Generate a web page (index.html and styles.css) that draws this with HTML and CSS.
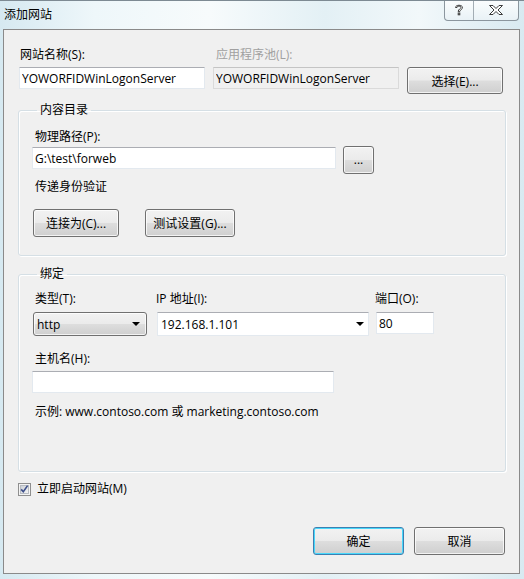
FILE: index.html
```html
<!DOCTYPE html>
<html lang="zh-CN">
<head>
    <meta charset="UTF-8">
    <title>添加网站</title>
    <link rel="stylesheet" href="styles.css">
</head>
<body>
    <div class="window">
        <div class="titlebar">
            <span class="title">添加网站</span>
            <div class="caption-btns">
                <span class="cbtn help">
                    <svg width="12" height="14" viewBox="0 0 12 14">
                        <path d="M2.5 4.5 C2.5 1.5 9.5 1.5 9.5 4.5 C9.5 6.5 6.8 6.8 6.8 8.5 L5.2 8.5 C5.2 6 8 5.8 8 4.4 C8 2.6 4 2.6 4 4.5 Z" fill="#fff" stroke="#3b3b3b" stroke-width="1"/>
                        <rect x="5.2" y="10" width="1.6" height="1.8" fill="#fff" stroke="#3b3b3b" stroke-width="1"/>
                    </svg>
                </span>
                <span class="cbtn close">
                    <svg width="16" height="12" viewBox="0 0 16 12">
                        <path d="M1.5 1.5 H5 L8 4.5 L11 1.5 H14.5 L10 6 L14.5 10.5 H11 L8 7.5 L5 10.5 H1.5 L6 6 Z" fill="#fff" stroke="#3b3b3b" stroke-width="1" stroke-linejoin="round"/>
                    </svg>
                </span>
            </div>
        </div>

        <div class="client">
            <div class="site-row">
                <label class="lbl">网站名称(S):</label>
                <label class="lbl disabled">应用程序池(L):</label>
                <span></span>
                <input class="textbox" type="text" value="YOWORFIDWinLogonServer">
                <input class="textbox readonly" type="text" value="YOWORFIDWinLogonServer" readonly>
                <button class="btn btn-wide">选择(E)...</button>
            </div>

            <fieldset class="group group-content">
                <legend>内容目录</legend>
                <div class="lbl indent">物理路径(P):</div>
                <div class="path-row">
                    <input class="textbox path" type="text" value="G:\test\forweb">
                    <button class="btn btn-browse">...</button>
                </div>
                <div class="lbl indent pass-through">传递身份验证</div>
                <div class="auth-row">
                    <button class="btn btn-connect">连接为(C)...</button>
                    <button class="btn btn-test">测试设置(G)...</button>
                </div>
            </fieldset>

            <fieldset class="group group-binding">
                <legend>绑定</legend>
                <div class="binding-grid">
                    <div class="lbl">类型(T):</div>
                    <div class="lbl ip-lbl">IP 地址(I):</div>
                    <div class="lbl port-lbl">端口(O):</div>
                    <div class="dropdown">
                        <span>http</span>
                        <span class="arrow"></span>
                    </div>
                    <div class="combo">
                        <span>192.168.1.101</span>
                        <span class="arrow"></span>
                    </div>
                    <input class="textbox port" type="text" value="80">
                </div>
                <div class="lbl indent host-lbl">主机名(H):</div>
                <input class="textbox host" type="text" value="">
                <div class="lbl indent example">示例: www.contoso.com 或 marketing.contoso.com</div>
            </fieldset>

            <label class="check-row">
                <span class="checkbox">
                    <svg width="13" height="13" viewBox="0 0 13 13">
                        <defs>
                            <linearGradient id="cbg" x1="0" y1="0" x2="1" y2="1">
                                <stop offset="0" stop-color="#cbcfd5"/>
                                <stop offset="1" stop-color="#f6f6f6"/>
                            </linearGradient>
                        </defs>
                        <rect x="0.5" y="0.5" width="12" height="12" fill="#f4f4f4" stroke="#8f8f8f"/>
                        <rect x="2.5" y="2.5" width="8" height="8" fill="url(#cbg)" stroke="#b8bcc2"/>
                        <path d="M3.2 6.4 L5.3 8.8 L9.6 2.6" fill="none" stroke="#3d4f8a" stroke-width="1.6"/>
                    </svg>
                </span>
                <span>立即启动网站(M)</span>
            </label>

            <div class="actions">
                <button class="btn btn-dlg default">确定</button>
                <button class="btn btn-dlg">取消</button>
            </div>
        </div>
    </div>
</body>
</html>
```

FILE: styles.css
```css
body {
    margin: 0;
    padding: 0;
    font-family: "Open Sans", "Noto Sans CJK SC", sans-serif;
    font-size: 12px;
    color: #000;
}
.window {
    width: 524px;
    height: 579px;
    box-sizing: border-box;
    border-top: 1px solid #7d8a93;
    background: linear-gradient(90deg, #d6e9f1 0%, #eef7fa 18%, #f7fbfc 40%, #e3f0f5 62%, #f2f8fa 80%, #d8eaf1 100%);
    overflow: hidden;
}
.titlebar {
    height: 28px;
    display: flex;
    justify-content: space-between;
    align-items: flex-start;
}
.title {
    margin: 6px 0 0 4px;
    line-height: 16px;
    color: #000;
}
.caption-btns {
    display: flex;
    margin: -1px 5px 0 0;
    height: 20px;
    border: 1px solid #8b969e;
    border-top: none;
    border-radius: 0 0 4px 4px;
    background: linear-gradient(#fbfdfe, #e9f2f6);
    overflow: hidden;
}
.cbtn {
    display: flex;
    align-items: center;
    justify-content: center;
}
.cbtn.help {
    width: 28px;
    border-right: 1px solid #a3adb4;
}
.cbtn.close {
    width: 44px;
}

.client {
    width: 517px;
    height: 545px;
    margin-left: 3px;
    box-sizing: border-box;
    border: 1px solid #8a8a8a;
    background: #f0f0f0;
}

.lbl {
    line-height: 16px;
    white-space: nowrap;
}
.lbl.disabled {
    color: #a0a0a0;
}
.indent {
    padding-left: 3px;
}

.textbox {
    box-sizing: border-box;
    height: 22px;
    margin: 0;
    padding: 0 2px;
    font: inherit;
    color: #000;
    background: #fff;
    border: 1px solid #e3e9ef;
    border-top-color: #abadb3;
    outline: none;
}
.textbox.readonly {
    background: #f0f0f0;
    border-color: #dadada;
    border-top-color: #c4c4c4;
}

.btn {
    box-sizing: border-box;
    height: 27px;
    margin: 0;
    padding: 0;
    font: inherit;
    color: #000;
    border: 1px solid #707070;
    border-radius: 3px;
    background: linear-gradient(#f2f2f2 0%, #ebebeb 48%, #dddddd 52%, #cfcfcf 100%);
    box-shadow: inset 0 0 0 1px rgba(255, 255, 255, 0.75);
}
.btn.default {
    border-color: #3c7fb1;
    box-shadow: inset 0 0 0 1px #48d8fb;
}

.site-row {
    display: grid;
    grid-template-columns: 186px 186px 96px;
    column-gap: 8px;
    row-gap: 4px;
    align-items: start;
    padding: 17px 0 0 15px;
}
.site-row .lbl {
    padding-left: 1px;
}
.site-row .lbl.disabled {
    padding-left: 3px;
}

.group {
    width: 488px;
    box-sizing: border-box;
    margin: 8px 0 0 14px;
    padding: 11px 13px 18px 13px;
    border: 1px solid #d5dfe5;
    border-radius: 3px;
    box-shadow: inset 1px 1px 0 #fff, 1px 1px 0 #fff;
}
.group legend {
    margin-left: 5px;
    padding: 0 3px;
    line-height: 16px;
}

.path-row {
    display: flex;
    align-items: flex-start;
    gap: 7px;
    margin-top: 1px;
}
.textbox.path {
    width: 304px;
    margin-top: 1px;
}
.btn-browse {
    width: 31px;
    height: 28px;
    line-height: 26px;
}
.pass-through {
    margin-top: 5px;
}
.auth-row {
    display: flex;
    gap: 26px;
    margin-top: 14px;
    padding-left: 1px;
}
.btn-connect {
    width: 86px;
    height: 28px;
}
.btn-test {
    width: 90px;
    height: 28px;
}
.btn-wide {
    width: 96px;
}

.group-binding {
    margin-top: 10px;
    padding: 9px 13px 51px 13px;
}
.binding-grid {
    display: grid;
    grid-template-columns: 114px 212px 58px;
    column-gap: 10px;
    row-gap: 5px;
    align-items: start;
    margin-left: 1px;
}
.binding-grid .lbl {
    padding-left: 2px;
}
.binding-grid .ip-lbl {
    padding-left: 0;
    margin-left: -1px;
}
.binding-grid .port-lbl {
    padding-left: 0;
    margin-left: -4px;
}
.dropdown,
.combo {
    box-sizing: border-box;
    height: 24px;
    display: flex;
    align-items: center;
    padding-left: 3px;
}
.dropdown {
    border: 1px solid #707070;
    border-radius: 3px;
    background: linear-gradient(#f2f2f2 0%, #ebebeb 48%, #dddddd 52%, #cfcfcf 100%);
    box-shadow: inset 0 0 0 1px rgba(255, 255, 255, 0.75);
}
.combo {
    background: #fff;
    border: 1px solid #e3e9ef;
    border-top-color: #abadb3;
}
.arrow {
    margin-left: auto;
    margin-right: 6px;
    width: 0;
    height: 0;
    border-left: 4px solid transparent;
    border-right: 4px solid transparent;
    border-top: 4px solid #000;
}
.combo .arrow {
    margin-right: 4px;
}
.textbox.port {
    width: 58px;
    margin-left: -3px;
}
.host-lbl {
    margin-top: 15px;
}
.textbox.host {
    display: block;
    width: 302px;
    margin-top: 4px;
}
.example {
    margin-top: 11px;
}

.check-row {
    display: flex;
    align-items: center;
    gap: 6px;
    margin: 9px 0 0 14px;
    line-height: 16px;
}
.checkbox {
    display: flex;
}

.actions {
    display: flex;
    justify-content: flex-end;
    gap: 10px;
    margin-top: 30px;
    padding-right: 14px;
}
.btn-dlg {
    width: 91px;
    height: 28px;
}
```
